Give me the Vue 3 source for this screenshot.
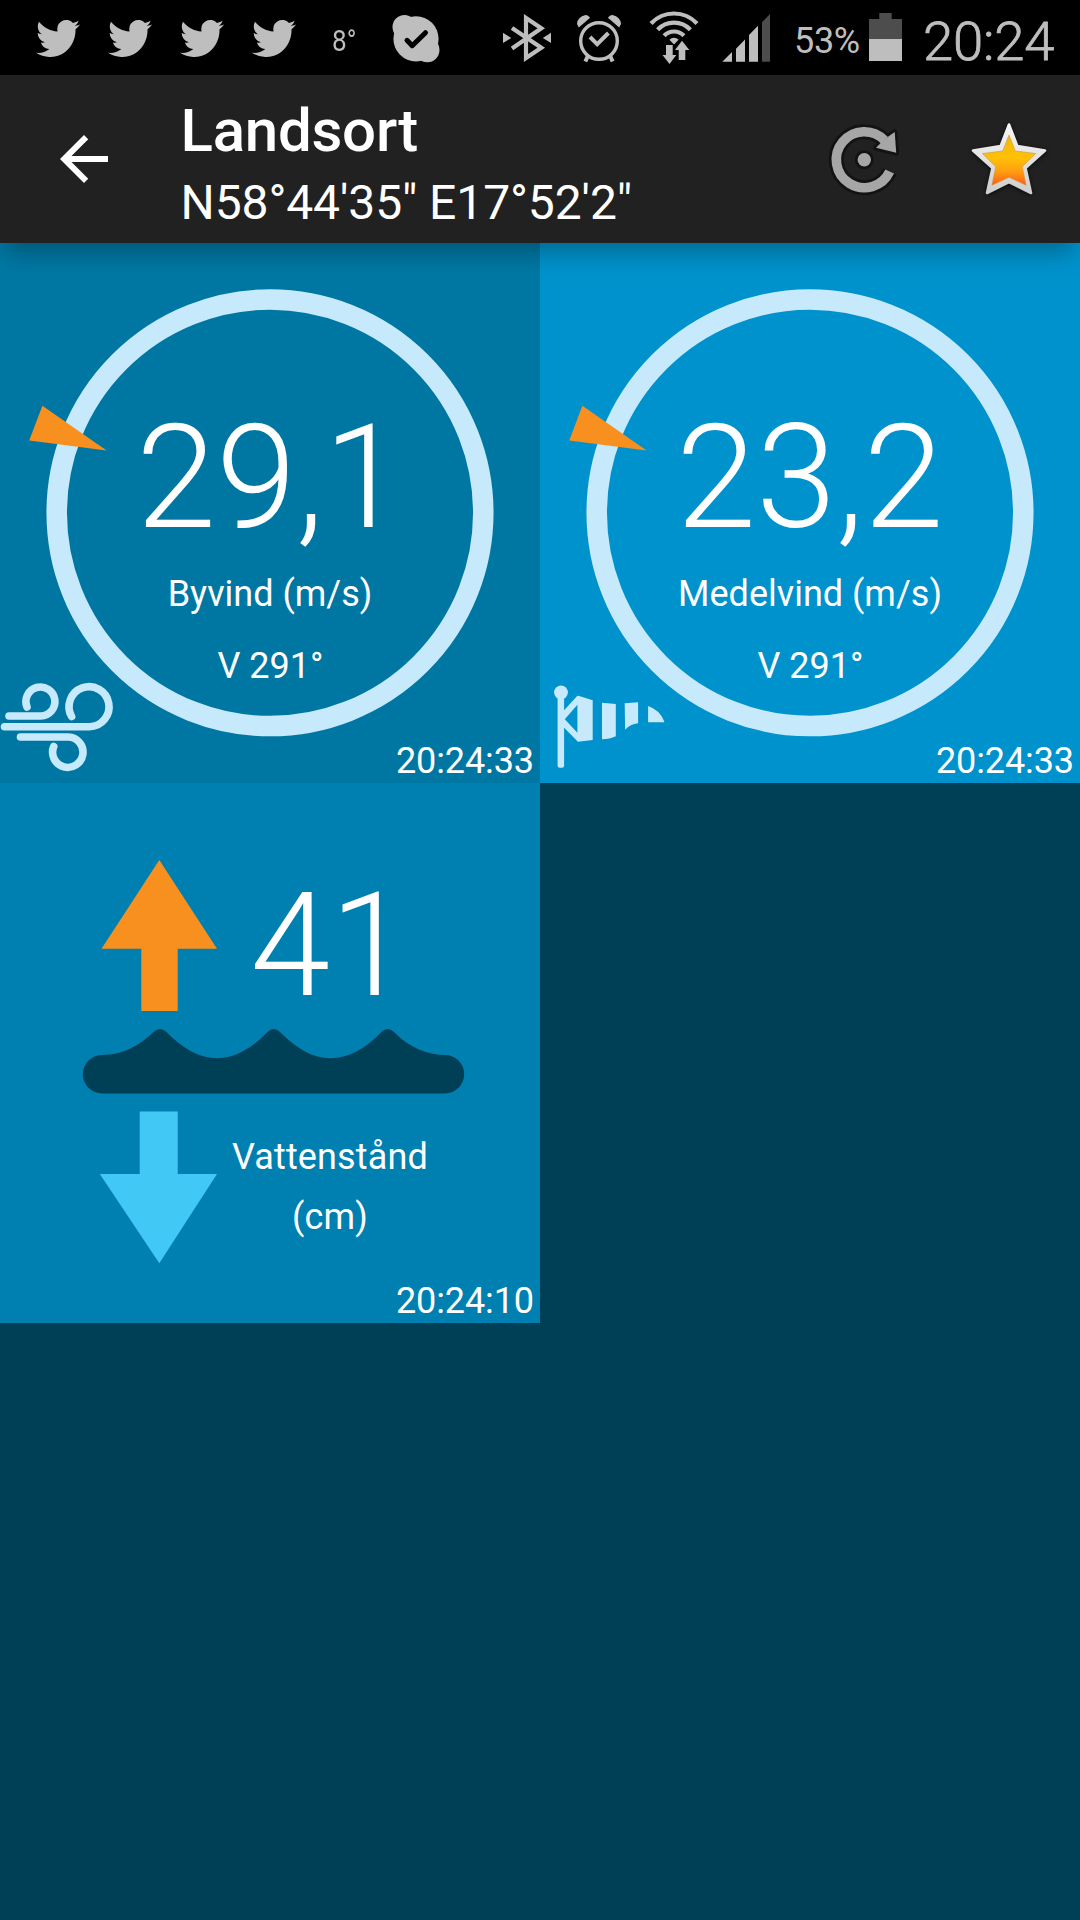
<script setup>
const winds = [
  { id: 'gust', value: '29,1', label: 'Byvind (m/s)', direction: 'V 291°', time: '20:24:33' },
  { id: 'mean', value: '23,2', label: 'Medelvind (m/s)', direction: 'V 291°', time: '20:24:33' },
]
const tweets = [0, 1, 2, 3]
</script>

<template>
  <div class="screen">
    <div class="status">
      <div class="tweets">
        <svg v-for="t in tweets" :key="t" class="tweet" viewBox="0 2.25 24 19.5" preserveAspectRatio="none">
          <path d="M23.953 4.57a10 10 0 01-2.825.775 4.958 4.958 0 002.163-2.723c-.951.555-2.005.959-3.127 1.184a4.92 4.92 0 00-8.384 4.482C7.69 8.095 4.067 6.13 1.64 3.162a4.822 4.822 0 00-.666 2.475c0 1.71.87 3.213 2.188 4.096a4.904 4.904 0 01-2.228-.616v.06a4.923 4.923 0 003.946 4.827 4.996 4.996 0 01-2.212.085 4.936 4.936 0 004.604 3.417 9.867 9.867 0 01-6.102 2.105c-.39 0-.779-.023-1.17-.067a13.995 13.995 0 007.557 2.209c9.053 0 13.998-7.496 13.998-13.985 0-.21 0-.42-.015-.63A9.935 9.935 0 0024 4.59z" />
        </svg>
      </div>
      <span class="temp">8°</span>
      <svg class="skype" width="60" height="75" viewBox="386 0 60 75">
        <circle cx="404.5" cy="27" r="12" />
        <circle cx="427.3" cy="50" r="12.2" />
        <circle cx="416" cy="38.8" r="22.6" />
        <path class="tick" d="M407 40.3l5.2 5.4 13.3-13" />
      </svg>
      <svg class="radio" width="220" height="75" viewBox="500 0 220 75">
        <path class="line" stroke-width="4.2" d="M512 28l29.3 19.8L526 58V18l15.3 10.2L512 48.5" />
        <path d="M503 32.7v10.4l8.2-5.2zM551 32.7v10.4l-8.2-5.2z" />
        <circle class="line" stroke-width="3.4" cx="599" cy="41" r="18.3" />
        <path class="line" stroke-width="4" d="M590 37l7.2 7.2 11.2-11.2M588 55.5l-2.6 6M610 55.5l2.6 6" />
        <path d="M578.8 27.6L577 24q.5-7 8.5-8.9 2.5-.3 4.6 2.6zM619.2 27.6L621 24q-.5-7-8.5-8.9-2.5-.3-4.6 2.6z" />
        <path class="line" stroke-width="4.2" d="M651 23.5A31.5 31.5 0 0 1 697 23.5M657.6 29.7A22.5 22.5 0 0 1 690.4 29.7M664.1 35.8A13.5 13.5 0 0 1 683.9 35.8" />
        <path d="M674 44.5l-4.6-4.8a6.6 6.6 0 0 1 9.2 0z" />
        <path class="gap" d="M666 45h6.7v10h3.6l-6.8 9-7-9h3.5zM682 40.7l7.3 9.3h-4v10h-6.6V50H675z" />
      </svg>
      <svg class="signal" width="52" height="75" viewBox="720 0 52 75">
        <path d="M722.3 61.8L732 52v9.8zM736 61.8V48.7l9-9.3v22.4zM749 61.8V35l9-9.3v36.1z" />
        <path class="dim" d="M762 61.8V22.3l8-8.3v47.8z" />
      </svg>
      <span class="percent">53%</span>
      <svg class="battery" width="33" height="75" viewBox="869 0 33 75">
        <path class="dim" d="M869 19h10.3v-6h12.4v6H902v20h-33z" />
        <path d="M869 39h33v22h-33z" />
      </svg>
      <span class="clock">20:24</span>
    </div>

    <header class="toolbar">
      <svg class="back" width="72" height="72" viewBox="0 0 24 24">
        <path d="M20 11H7.83l5.59-5.59L12 4l-8 8 8 8 1.41-1.41L7.83 13H20v-2z" />
      </svg>
      <div class="titles">
        <h1>Landsort</h1>
        <p>N58°44'35" E17°52'2"</p>
      </div>
      <svg class="refresh" width="80" height="80" viewBox="824 120 80 80">
        <g class="edge">
          <path class="arc" d="M889.7 171.5A28 28 0 1 1 884.5 140.3" />
          <path class="head" d="M894.7 132l1.5 20.8-20.2-5 5-5 7.7-6.5z" />
          <circle cx="864.3" cy="159.7" r="6.7" />
        </g>
        <path class="arc" d="M889.7 171.5A28 28 0 1 1 884.5 140.3" />
        <path class="head" d="M894.7 132l1.5 20.8-20.2-5 5-5 7.7-6.5z" />
        <circle class="head" cx="864.3" cy="159.7" r="6.7" />
      </svg>
      <svg class="star" width="90" height="90" viewBox="964 115 90 90">
        <defs>
          <linearGradient id="rim" x1="0" y1="0" x2="0" y2="1">
            <stop offset="0" stop-color="#f6f6f6" />
            <stop offset="1" stop-color="#cecece" />
          </linearGradient>
          <linearGradient id="gold" x1="0" y1="0" x2="0" y2="1">
            <stop offset="0" stop-color="#f2b705" />
            <stop offset=".45" stop-color="#ffc107" />
            <stop offset=".72" stop-color="#ff9f10" />
            <stop offset="1" stop-color="#ff5a1a" />
          </linearGradient>
        </defs>
        <path class="rim" fill="url(#rim)" stroke="url(#rim)" d="M1009 124.5l8.3 21.5 27.7 4.5-19.5 17.5 5.5 25-22-11-22 11 5.5-25-19.5-17.5 27.7-4.5z" />
        <path fill="url(#gold)" stroke="#c99a3a" stroke-width=".6" d="M1009 135l6.3 16 20.4 2.5-13.4 13.2 3.8 18.6-17.1-8-17.1 8 3.8-18.6-13.4-13.2 20.4-2.5z" />
      </svg>
    </header>

    <main class="grid">
      <section v-for="w in winds" :key="w.id" class="tile" :class="w.id">
        <svg class="backdrop" viewBox="0 0 540 540">
          <circle class="ring" cx="270" cy="269.8" r="213.3" />
          <path class="needle" d="M42.4 162.7L29.2 197.6 106.6 207.6z" />
          <g v-if="w.id === 'gust'" class="breeze">
            <path d="M9 473H40.8A14.5 14.5 0 1 0 27 464" />
            <path d="M4.5 483.7H89.4A20 20 0 1 0 71.6 473.5" />
            <path d="M20.5 494H68.2A15.2 15.2 0 1 1 53.7 503.5" />
          </g>
          <g v-else class="sock">
            <circle cx="21" cy="449.3" r="6.9" />
            <rect x="17.6" y="450" width="6.5" height="74.7" rx="2" />
            <path fill-rule="evenodd" d="M23.4 468L37.2 453Q38.5 452.4 40 453.2L52.7 457.3V497L37.9 498.7 23.4 484zM24.8 476.3L37.4 489.7V461.8z" />
            <path d="M62 459.7l13.8 1.3v32.3q-6 3-13.8 3zM84.7 460.3l13.4-1v21q-8 1-13 6.4zM108.1 463q12 4 16.3 15.7l-.4.5h-15.9z" />
          </g>
        </svg>
        <div class="value">{{ w.value }}</div>
        <div class="label">{{ w.label }}</div>
        <div class="label direction">{{ w.direction }}</div>
        <div class="time">{{ w.time }}</div>
      </section>

      <section class="tile water">
        <svg class="backdrop" viewBox="0 0 540 540">
          <path class="up" d="M159.3 77L217 165.8H177.7V228H141.3V165.8H101.5z" />
          <path class="sea" d="M102 272C122 272 139 263 153.5 249Q160 243 166.5 249C183 266 200 275.3 217 275.3S251 266 267.5 249Q273.7 243 280 249C297 266 313 275.3 330.5 275.3S365 266 381.5 249Q387.7 243 394 249C408 264 428 272 445 272A19.2 19.2 0 0 1 445 310.4H102A19.2 19.2 0 0 1 102 272z" />
          <path class="down" d="M139.7 328.5H177.7V391H217L159.3 480.3 99.8 391H139.7z" />
        </svg>
        <div class="value">41</div>
        <div class="label level">Vattenstånd<br />(cm)</div>
        <div class="time">20:24:10</div>
      </section>
    </main>
  </div>
</template>

<style>
body {
  margin: 0;
  background: #004057;
}
</style>

<style scoped>
.screen {
  width: 1080px;
  height: 1920px;
  overflow: hidden;
  background: #004057;
  color: #fff;
  font-family: Roboto, "Liberation Sans", sans-serif;
}
svg {
  display: block;
  flex: none;
}

/* Status bar */
.status {
  display: flex;
  height: 75px;
  background: #000;
  color: #bebebe;
  fill: #bebebe;
  line-height: 81px;
  white-space: nowrap;
}
.tweets {
  display: flex;
  gap: 28px;
  padding: 20px 0 0 36px;
}
.tweet {
  width: 44px;
  height: 37px;
}
.temp {
  width: 54px;
  margin-left: 36px;
  font-size: 30px;
  transform: scaleX(.87);
  transform-origin: 0 0;
}
.tick {
  fill: none;
  stroke: #000;
  stroke-width: 5;
  stroke-linecap: round;
  stroke-linejoin: round;
}
.radio {
  margin-left: 54px;
}
.line {
  fill: none;
  stroke: #bebebe;
}
.gap {
  stroke: #000;
  stroke-width: 2;
  paint-order: stroke;
}
.dim {
  fill: #4d4d4d;
}
.percent {
  width: 75px;
  margin-left: 22px;
  font-size: 36px;
  letter-spacing: -.3px;
  line-height: 82px;
}
.clock {
  margin-left: 21px;
  font-size: 54.5px;
  font-weight: 300;
  letter-spacing: -.2px;
  line-height: 82px;
  -webkit-text-stroke: .8px #bebebe;
}

/* Toolbar */
.toolbar {
  position: relative;
  z-index: 1;
  display: flex;
  height: 168px;
  background: #212121;
  box-shadow: 0 16px 22px -6px rgba(0, 0, 0, .27);
}
.back {
  margin: 48px 0 0 48px;
  fill: #fff;
}
.titles {
  width: 643px;
  padding: 20px 0 0 60.5px;
  box-sizing: border-box;
  white-space: nowrap;
}
.titles h1 {
  margin: 0;
  font-size: 60px;
  font-weight: 500;
  letter-spacing: -.25px;
  line-height: 71px;
}
.titles p {
  margin: 9px 0 0;
  font-size: 48px;
  letter-spacing: -.1px;
  line-height: 56px;
}
.refresh {
  margin: 45px 0 0 61px;
}
.arc {
  fill: none;
  stroke: #a6a6a6;
  stroke-width: 9.6;
}
.head {
  fill: #a6a6a6;
}
.edge path,
.edge circle {
  stroke: #131313;
  stroke-width: 5.5;
  stroke-linejoin: round;
}
.edge .arc {
  stroke-width: 15;
}
.star {
  margin: 40px 0 0 60px;
  filter: drop-shadow(0 1px 2px rgba(0, 0, 0, .7));
}
.rim {
  stroke-width: 2.6;
  stroke-linejoin: round;
}

/* Measurement tiles */
.grid {
  display: grid;
  grid-template-columns: 540px 540px;
  grid-auto-rows: 540px;
}
.tile {
  position: relative;
  display: flex;
  flex-direction: column;
  align-items: center;
  box-sizing: border-box;
  padding-top: 163px;
  white-space: nowrap;
}
.gust {
  background: #0077a3;
}
.mean {
  background: #0092cc;
}
.water {
  padding: 91px 0 0 120px;
  background: #0080b0;
}
.backdrop {
  position: absolute;
  inset: 0;
  width: 540px;
  height: 540px;
}
.ring {
  fill: none;
  stroke: #c6eafc;
  stroke-width: 20.5;
}
.needle,
.up {
  fill: #f7901e;
}
.breeze {
  fill: none;
  stroke: #c6eafc;
  stroke-width: 7.6;
  stroke-linecap: round;
}
.sock {
  fill: #c6eafc;
}
.sea {
  fill: #004057;
}
.down {
  fill: #42c8f5;
}
.value,
.label,
.time {
  position: relative;
}
.value {
  font-size: 144px;
  font-weight: 300;
  line-height: 144px;
}
.label {
  margin-top: 20px;
  font-size: 36px;
  line-height: 48px;
  text-align: center;
}
.direction {
  margin-top: 24px;
  padding-left: 1px;
}
.level {
  margin-top: 109px;
  letter-spacing: .15px;
  line-height: 60px;
}
.time {
  align-self: flex-end;
  margin: auto 6px 0 0;
  font-size: 36px;
  letter-spacing: -.1px;
  line-height: 44px;
}
</style>
